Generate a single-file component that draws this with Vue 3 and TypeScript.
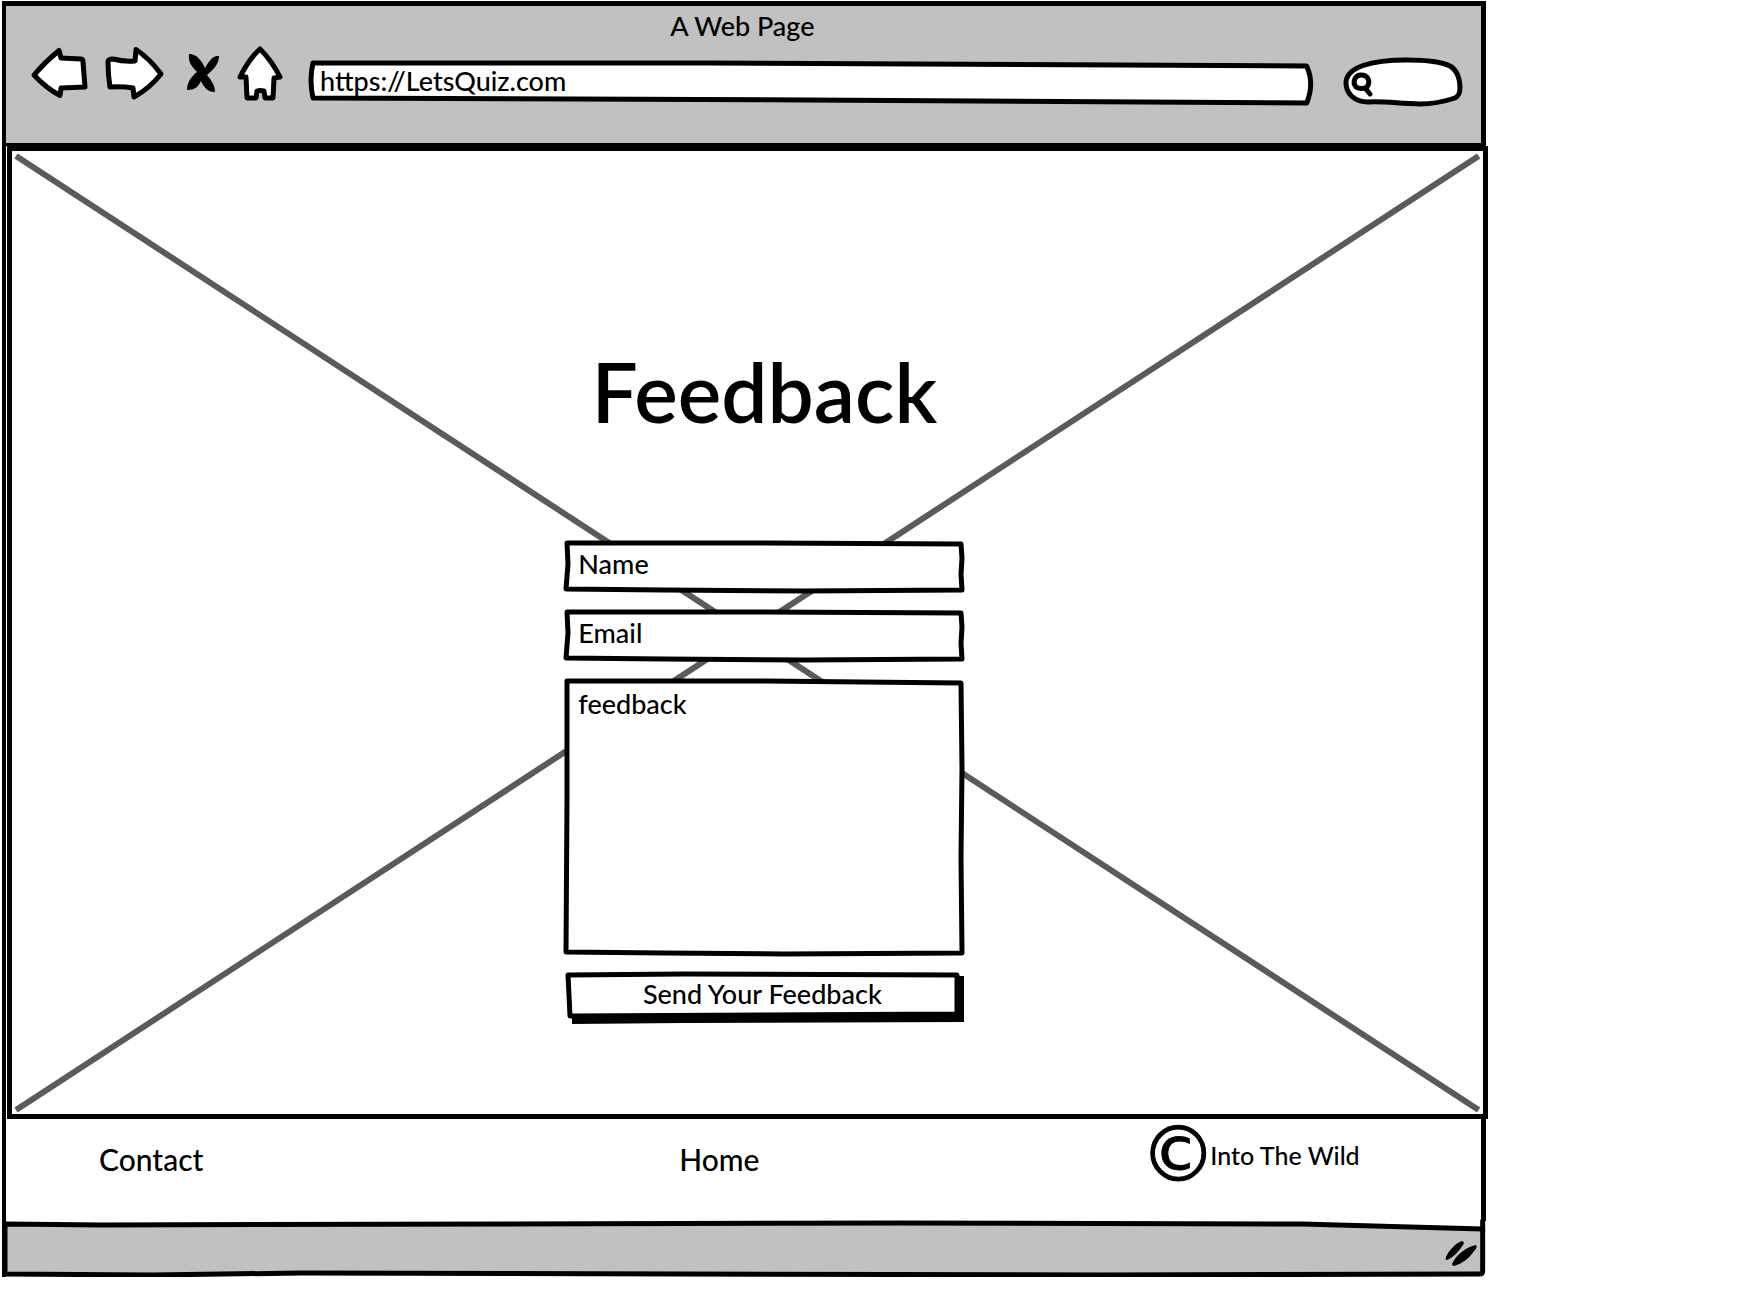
<script setup lang="ts">
import { ref } from 'vue'

const address = ref('https://LetsQuiz.com')
const query = ref('')
const name = ref('')
const email = ref('')
const message = ref('')
</script>

<template>
  <div class="browser">
    <header class="chrome">
      <div class="title">A Web Page</div>
      <div class="toolbar">
        <nav class="nav" aria-label="Browser">
          <button type="button" aria-label="Back">
            <svg class="ink" viewBox="30 46 58 54" width="58" height="54">
              <path d="M34 75Q45 62 59 50.500L61 58L81 59Q83 59 83 62L85 87L61 88L60 95.500Q46 88 34 75Z" />
            </svg>
          </button>
          <button type="button" aria-label="Forward">
            <svg class="ink" viewBox="106 46 62 56" width="62" height="56">
              <path d="M108 63Q108 60 113 60Q124 63 135 62L136 50.500Q150 60 161 75Q150 89 134 98L133 89Q122 87 110 88Q108 76 108 63Z" />
            </svg>
          </button>
          <button type="button" aria-label="Stop">
            <svg viewBox="187 50 34 42" width="34" height="42">
              <path d="M190 52C198 52 203 59 206 66C210 59 214 53 220 54C220 62 214 68 208 73C213 79 216 84 216 90C208 90 205 85 202 79C199 85 196 88 188 88C188 80 193 74 198 70C192 64 189 59 190 52Z" />
            </svg>
          </button>
          <button type="button" aria-label="Home">
            <svg class="ink" viewBox="238 44 46 58" width="46" height="58">
              <path d="M260 49Q272 61 280 77L274 78L273 98H265L264 91Q260 90 257 91L256 98H247L246 77L240 77Q249 59 260 49Z" />
            </svg>
          </button>
        </nav>
        <label class="address">
          <svg class="ink frame" viewBox="0 0 1008 46" preserveAspectRatio="none" aria-hidden="true">
            <path d="M5 3L400 3L1001 6Q1009 24 1001 43L500 40L5 38Q1 20 5 3Z" />
          </svg>
          <input v-model="address" type="text" aria-label="Address" />
        </label>
        <label class="search">
          <svg class="ink frame" viewBox="0 0 120 50" aria-hidden="true">
            <path d="M25 45C11 45 3 36 3 26C3 10 28 3 64 3C84 3 99 5 107 9C114 13 117 22 117 30C117 36 116 39 112 41C103 44 90 47 77 47C57 47 44 44 25 45Z" />
            <path d="M13 30C9 25 12 18 18 18C25 18 28 24 24 30C21 32 16 32 13 30M22 31L27 37" />
          </svg>
          <input v-model="query" type="search" aria-label="Search" />
        </label>
      </div>
    </header>

    <main class="canvas">
      <svg class="cross" aria-hidden="true">
        <line x1="0" y1="0" x2="100%" y2="100%" />
        <line x1="0" y1="100%" x2="100%" y2="0" />
      </svg>
      <h1>Feedback</h1>
      <form @submit.prevent>
        <label class="field">
          <svg class="ink frame" viewBox="0 0 400 53" preserveAspectRatio="none" aria-hidden="true">
            <path d="M3 3L200 3L397 4L398 18L397 34L398 50L240 51L100 50L2 49L4 24Z" />
          </svg>
          <input v-model="name" type="text" placeholder="Name" aria-label="Name" />
        </label>
        <label class="field">
          <svg class="ink frame" viewBox="0 0 400 53" preserveAspectRatio="none" aria-hidden="true">
            <path d="M3 3L200 3L397 4L398 18L397 34L398 50L240 51L100 50L2 49L4 24Z" />
          </svg>
          <input v-model="email" type="email" placeholder="Email" aria-label="Email" />
        </label>
        <label class="field message">
          <svg class="ink frame" viewBox="0 0 400 278" preserveAspectRatio="none" aria-hidden="true">
            <path d="M3 3L200 3L397 5L398 90L397 180L398 275L220 276L100 275L2 274L3 120Z" />
          </svg>
          <textarea v-model="message" placeholder="feedback" aria-label="Feedback message"></textarea>
        </label>
        <button class="send" type="submit">
          <svg class="ink frame" viewBox="0 0 400 52" preserveAspectRatio="none" aria-hidden="true">
            <path class="shade" d="M8 44L391 42V4H400V50L120 51L8 52Z" />
            <path d="M4 3L120 2L393 3V42L200 43L6 44Z" />
          </svg>
          <span>Send Your Feedback</span>
        </button>
      </form>
    </main>

    <footer class="links">
      <a class="contact" href="#contact">Contact</a>
      <a href="#home">Home</a>
      <div class="rights"><span class="mark">©</span><span>Into The Wild</span></div>
    </footer>

    <div class="status">
      <svg class="ink frame" viewBox="0 0 1484 56" preserveAspectRatio="none" aria-hidden="true">
        <path class="bar" d="M3 3L100 4L898 2L1300 3L1481 8L1481 50Q1481 53 1478 53L1100 54L300 52L150 54L3 53Z" />
        <path d="M1481 0V10" />
      </svg>
      <svg class="grip" viewBox="0 0 34 28" width="34" height="28" aria-hidden="true">
        <path d="M2 18C5 11 12 4 18 2Q21 3 19 6C15 12 10 18 3 21Q1 21 2 18ZM8 25C12 16 22 8 32 6Q34 8 30 12C25 20 17 25 10 27Q8 27 8 25Z" />
      </svg>
    </div>
  </div>
</template>

<style>
body {
  background: #fff;
}
</style>

<style scoped>
.browser {
  box-sizing: border-box;
  width: 84.3%;
  margin: 1px 0 0 2px;
  border-left: 4px solid #000;
  color: #000;
  font-family: Lato, "Open Sans", sans-serif;
  font-size: 27px;
  font-weight: 500;
  line-height: 30px;
}

button,
input,
textarea {
  box-sizing: border-box;
  padding: 0;
  border: 0;
  border-radius: 0;
  background: none;
  color: inherit;
  font: inherit;
  outline: none;
}

input::placeholder,
textarea::placeholder {
  color: #000;
  opacity: 1;
}

a {
  color: inherit;
  text-decoration: none;
}

svg {
  display: block;
  overflow: visible;
}

.ink {
  fill: #fff;
  stroke: #000;
  stroke-width: 5px;
  stroke-linejoin: round;
  stroke-linecap: round;
}

.frame {
  position: absolute;
  inset: 0;
  width: 100%;
  height: 100%;
}

.chrome {
  box-sizing: border-box;
  height: 145px;
  padding: 5px 18px 0 24px;
  border: solid #000;
  border-width: 5px 5px 3px 0;
  background: #c1c1c1;
}

.title {
  padding: 0 8px 3px 0;
  text-align: center;
}

.toolbar {
  display: flex;
  align-items: flex-start;
  gap: 24px;
}

.nav {
  display: flex;
  align-items: center;
  gap: 18px;
}

.address,
.search {
  position: relative;
  display: block;
}

.address {
  flex: 1;
  height: 46px;
  margin-top: 16px;
}

.address input {
  position: relative;
  width: 100%;
  height: 40px;
  padding: 0 12px;
}

.search {
  width: 120px;
  height: 50px;
  margin: 13px 0 0 5px;
}

.search input {
  position: relative;
  width: 100%;
  height: 100%;
  padding: 0 16px 0 34px;
}

.canvas {
  position: relative;
  box-sizing: border-box;
  margin: 0 -2px 0 1px;
  padding: 166px 0 90px 34px;
  border: 5px solid #000;
  background: #fff;
}

.cross {
  position: absolute;
  inset: 5px 4px 4px;
  width: calc(100% - 8px);
  height: calc(100% - 9px);
  stroke: #5b5b5d;
  stroke-width: 6px;
}

h1 {
  position: relative;
  margin: 0;
  font-size: 82px;
  font-weight: 600;
  line-height: 148px;
  text-align: center;
}

form {
  position: relative;
  display: flex;
  flex-direction: column;
  gap: 16px;
  width: 400px;
  margin: 75px auto 0;
}

.field {
  position: relative;
  display: block;
  height: 53px;
}

.field input,
.field textarea {
  position: relative;
  display: block;
  width: 100%;
  height: 100%;
  padding: 0 14px 6px;
}

.field.message {
  height: 278px;
}

.field textarea {
  padding-top: 11px;
  resize: none;
}

.send {
  position: relative;
  height: 52px;
  padding: 0 4px 8px 0;
}

.send span {
  position: relative;
}

.send .shade {
  fill: #000;
  stroke: none;
}

.links {
  display: grid;
  grid-template-columns: 1fr auto 1fr;
  align-items: start;
  height: 102px;
  padding: 0 121px 0 73px;
  border-right: 5px solid #000;
  font-size: 30px;
}

.links a {
  margin-top: 25px;
}

.contact {
  padding-left: 20px;
}

.rights {
  display: flex;
  justify-content: flex-end;
  margin-top: 6px;
  font-size: 25px;
  line-height: 60px;
}

.mark {
  margin-right: -6px;
  font-family: "DejaVu Sans", sans-serif;
  font-size: 76px;
  -webkit-text-stroke: 1px #000;
}

.status {
  position: relative;
  display: flex;
  align-items: center;
  justify-content: flex-end;
  box-sizing: border-box;
  height: 56px;
  padding: 8px 8px 0 0;
}

.status .frame {
  left: -4px;
  width: calc(100% + 4px);
}

.bar {
  fill: #c1c1c1;
}

.grip {
  position: relative;
}
</style>
